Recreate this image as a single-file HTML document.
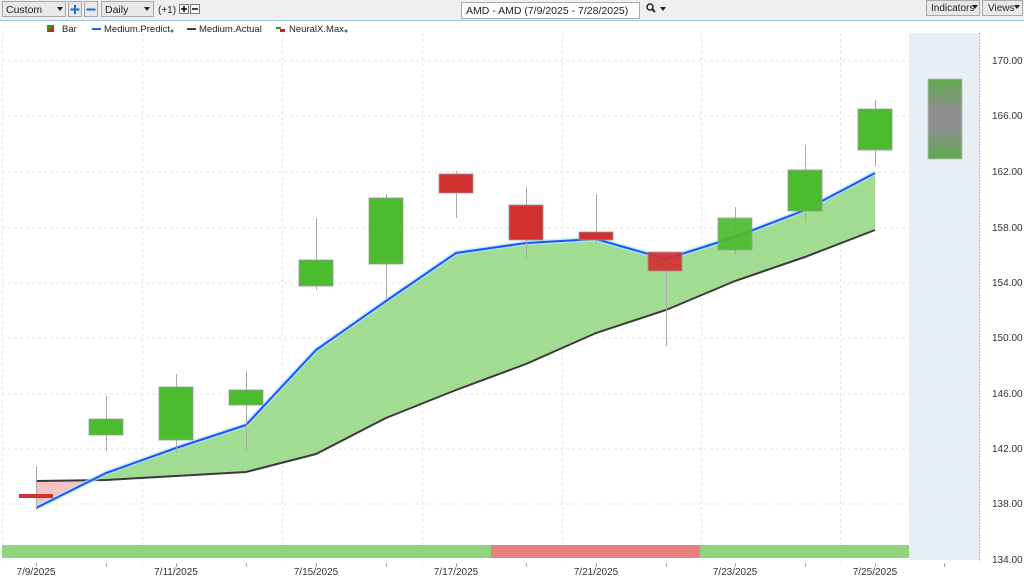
<!DOCTYPE html>
<html><head><meta charset="utf-8"><style>
body{margin:0;width:1024px;height:578px;overflow:hidden;background:#fff;font-family:"Liberation Sans",sans-serif;}
</style></head><body>
<svg width="1024" height="578" viewBox="0 0 1024 578" xmlns="http://www.w3.org/2000/svg" font-family="Liberation Sans, sans-serif">
<defs>
<linearGradient id="fg" x1="0" y1="0" x2="0" y2="1">
<stop offset="0" stop-color="#5fa84f"/><stop offset="0.4" stop-color="#8f8f8f"/><stop offset="0.6" stop-color="#8f8f8f"/><stop offset="1" stop-color="#5fa84f"/></linearGradient>
</defs>
<rect x="0" y="0" width="1024" height="20" fill="#efefef"/>
<line x1="0" y1="20.5" x2="1024" y2="20.5" stroke="#9cc3e6"/>
<rect x="2.5" y="1.5" width="63" height="15" fill="#e8e8e8" stroke="#a8a8a8"/>
<text x="6" y="13" font-size="10.5" fill="#222">Custom</text>
<path d="M57 7h6l-3 4z" fill="#222"/>
<rect x="68.5" y="1.5" width="13" height="15" fill="#e8e8e8" stroke="#a8a8a8"/>
<path d="M75 5v9M70.5 9.5h9" stroke="#1a6fc9" stroke-width="2"/>
<rect x="84.5" y="1.5" width="13" height="15" fill="#e8e8e8" stroke="#a8a8a8"/>
<path d="M86.5 9.5h9" stroke="#1a6fc9" stroke-width="2"/>
<rect x="101.5" y="1.5" width="52" height="15" fill="#e8e8e8" stroke="#a8a8a8"/>
<text x="105" y="13" font-size="10.5" fill="#222">Daily</text>
<path d="M144 7h6l-3 4z" fill="#222"/>
<text x="158" y="13" font-size="10" fill="#222">(+1)</text>
<rect x="179.5" y="4.5" width="9" height="9" fill="#fff" stroke="#777"/>
<path d="M184 6v6M181 9h6" stroke="#000" stroke-width="1.5"/>
<rect x="190.5" y="4.5" width="9" height="9" fill="#fff" stroke="#777"/>
<path d="M192 9h6" stroke="#000" stroke-width="1.5"/>
<rect x="461.5" y="2.5" width="178" height="16" fill="#fff" stroke="#aaa"/>
<text x="466" y="14" font-size="10.5" fill="#222">AMD - AMD (7/9/2025 - 7/28/2025)</text>
<circle cx="650" cy="7" r="3" fill="none" stroke="#222" stroke-width="1.5"/>
<path d="M652 9l3 3" stroke="#222" stroke-width="2"/>
<path d="M660 7h6l-3 4z" fill="#222"/>
<rect x="926.5" y="0.5" width="53" height="15" fill="#e8e8e8" stroke="#aaa"/>
<text x="931" y="11" font-size="10" fill="#222">Indicators</text>
<path d="M972 5h6l-3 4z" fill="#222"/>
<rect x="982.5" y="0.5" width="40" height="15" fill="#e8e8e8" stroke="#aaa"/>
<text x="988" y="11" font-size="10" fill="#222">Views</text>
<path d="M1014 5h6l-3 4z" fill="#222"/>
<path d="M47 25h7v7h-7z" fill="#2a9a2a"/><path d="M54 25v7h-7z" fill="#d02020"/>
<text x="62" y="32" font-size="9.5" fill="#222">Bar</text>
<path d="M92 29h9" stroke="#2a5cff" stroke-width="2"/>
<text x="104" y="32" font-size="9.5" fill="#222">Medium.Predict</text><circle cx="172" cy="31" r="1.5" fill="#3a7ca0"/>
<path d="M187 29h9" stroke="#444" stroke-width="2"/>
<text x="199" y="32" font-size="9.5" fill="#222">Medium.Actual</text>
<path d="M276 27h5v2h-5z" fill="#2a9a2a"/><path d="M280 29h5v3h-5z" fill="#d02020"/>
<text x="289" y="32" font-size="9.5" fill="#222">NeuralX.Max</text><circle cx="346" cy="31" r="1.5" fill="#3a7ca0"/>
<rect x="909" y="33" width="70" height="527" fill="#e8eef6"/>
<line x1="979.5" y1="33" x2="979.5" y2="562" stroke="#9cc3e6" stroke-dasharray="2,1"/>
<g stroke="#e6e6e6" stroke-dasharray="3,3">
<path d="M2 61h977M2 116h977M2 172h977M2 228h977M2 283h977M2 338h977M2 394h977M2 449h977M2 504h977"/>
<path d="M2.5 33v530M142.5 33v530M282.5 33v530M422.5 33v530M562.5 33v530M701.5 33v530M840.5 33v530"/>
</g>
<g stroke="#aaa"><path d="M36.5 563v4M106.5 563v4M176.5 563v4M246.5 563v4M316.5 563v4M386.5 563v4M456.5 563v4M526.5 563v4M596.5 563v4M666.5 563v4M735.5 563v4M805.5 563v4M875.5 563v4M944.5 563v4"/></g>
<g font-size="10" fill="#333">
<text x="992" y="64">170.00</text><text x="992" y="119">166.00</text><text x="992" y="175">162.00</text><text x="992" y="231">158.00</text><text x="992" y="286">154.00</text><text x="992" y="341">150.00</text><text x="992" y="397">146.00</text><text x="992" y="452">142.00</text><text x="992" y="507">138.00</text><text x="992" y="563">134.00</text>
</g>
<g font-size="10" fill="#333" text-anchor="middle">
<text x="36" y="575">7/9/2025</text><text x="176" y="575">7/11/2025</text><text x="316" y="575">7/15/2025</text><text x="456" y="575">7/17/2025</text><text x="596" y="575">7/21/2025</text><text x="735" y="575">7/23/2025</text><text x="875" y="575">7/25/2025</text>
</g>
<rect x="2" y="545" width="907" height="13" fill="#90d47e"/>
<rect x="491" y="545" width="209" height="13" fill="#e88080"/>
<path d="M36 481L91 480L36 508Z" fill="#f4c4c4"/>
<path d="M91 480L106 473L176 448L246 425L316 350L386 301L456 253L526 243L596 239L666 259L735 237L805 210L875 173L875 230L805 257L735 281L666 310L596 333L526 364L456 390L386 418L316 454L246 472L176 476L106 480Z" fill="#a2dc92"/>
<polyline points="36,481 106,480 176,476 246,472 316,454 386,418 456,390 526,364 596,333 666,310 735,281 805,257 875,230" fill="none" stroke="#3a3a3a" stroke-width="2"/>
<polyline points="36,508 106,473 176,448 246,425 316,350 386,301 456,253 526,243 596,239 666,259 735,237 805,210 875,173" fill="none" stroke="#9ef0f8" stroke-width="5" opacity="0.7"/>
<polyline points="36,508 106,473 176,448 246,425 316,350 386,301 456,253 526,243 596,239 666,259 735,237 805,210 875,173" fill="none" stroke="#2a4cff" stroke-width="2"/>
<g stroke="#aaa"><path d="M36.5 466v44M106.5 396v55M176.5 374v79M246.5 371v79M316.5 218v72M386.5 194v106M456.5 171v47M526.5 187v71M596.5 194v50M666.5 252v94M735.5 207v48M805.5 145v77M875.5 100v66"/></g>
<g stroke="#999" stroke-width="0.8">
<rect x="19" y="494" width="34" height="4" fill="#d33030" stroke="none"/>
<rect x="89" y="419" width="34" height="16" fill="#4cbb30"/>
<rect x="159" y="387" width="34" height="53" fill="#4cbb30"/>
<rect x="229" y="390" width="34" height="15" fill="#4cbb30"/>
<rect x="299" y="260" width="34" height="26" fill="#4cbb30"/>
<rect x="369" y="198" width="34" height="66" fill="#4cbb30"/>
<rect x="439" y="174" width="34" height="19" fill="#d33030"/>
<rect x="509" y="205" width="34" height="35" fill="#d33030"/>
<rect x="579" y="232" width="34" height="8" fill="#d33030"/>
<rect x="648" y="252" width="34" height="19" fill="#d33030" opacity="0.92"/>
<rect x="718" y="218" width="34" height="32" fill="#4cbb30" opacity="0.92"/>
<rect x="788" y="170" width="34" height="41" fill="#4cbb30"/>
<rect x="858" y="109" width="34" height="41" fill="#4cbb30"/>
<rect x="928" y="79" width="34" height="80" fill="url(#fg)" stroke="#bbb"/>
</g>
</svg>
</body></html>
